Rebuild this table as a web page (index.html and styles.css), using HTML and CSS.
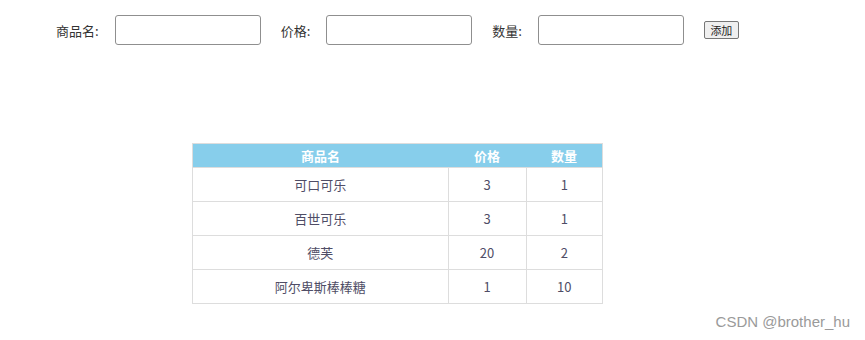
FILE: index.html
```html
<!DOCTYPE html>
<html lang="zh-CN">
<head>
    <meta charset="UTF-8">
    <meta name="viewport" content="width=device-width, initial-scale=1.0">
    <title>商品列表</title>
    <link rel="stylesheet" href="styles.css">
</head>
<body>
<div class="page">
    <div class="add-form">
        <label class="field-label" for="name">商品名:</label>
        <input type="text" id="name" class="field-input">

        <label class="field-label" for="price">价格:</label>
        <input type="text" id="price" class="field-input">

        <label class="field-label" for="count">数量:</label>
        <input type="text" id="count" class="field-input">

        <button class="add-btn">添加</button>
    </div>

    <table class="goods">
        <thead>
        <tr>
            <th class="col-name">商品名</th>
            <th class="col-price">价格</th>
            <th class="col-count">数量</th>
        </tr>
        </thead>
        <tbody>
        <tr><td>可口可乐</td><td>3</td><td>1</td></tr>
        <tr><td>百世可乐</td><td>3</td><td>1</td></tr>
        <tr><td>德芙</td><td>20</td><td>2</td></tr>
        <tr><td>阿尔卑斯棒棒糖</td><td>1</td><td>10</td></tr>
        </tbody>
    </table>

    <div class="watermark">CSDN @brother_hu</div>
</div>
</body>
</html>
```

FILE: styles.css
```css
body {
    margin: 0;
    font-family: "Noto Sans CJK SC", "Noto Sans", sans-serif;
    color: #333;
    background: #fff;
}

.page {
    position: relative;
    width: 865px;
    height: 340px;
}

.add-form {
    display: flex;
    align-items: center;
    padding: 15px 0 0 56px;
    height: 30px;
}

.field-label {
    font-size: 13px;
    margin-right: 16px;
}

.field-input {
    box-sizing: border-box;
    width: 146px;
    height: 30px;
    border: 1px solid #8f8f8f;
    border-radius: 3px;
    margin-right: 20px;
    padding: 0 4px;
}

.add-btn {
    box-sizing: border-box;
    width: 35px;
    height: 18px;
    padding: 0;
    font-family: inherit;
    font-size: 11px;
    line-height: 14px;
    color: #222;
    background: #efefef;
    border: 1px solid #767676;
    border-radius: 2px;
}

.goods {
    margin: 98px 0 0 192px;
    border-collapse: collapse;
    border: 1px solid #ddd;
    font-size: 13px;
    color: #4f4d66;
}

.goods th {
    height: 23px;
    padding: 0;
    background: #87ceeb;
    color: #fff;
    font-weight: bold;
    line-height: 23px;
    text-align: center;
}

.goods td {
    height: 33px;
    padding: 0;
    border: 1px solid #ddd;
    text-align: center;
    line-height: 20px;
}

.col-name {
    width: 255px;
}

.col-price {
    width: 78px;
}

.col-count {
    width: 76px;
}

.watermark {
    position: absolute;
    right: 15px;
    bottom: 10px;
    font-family: "Liberation Sans", Arial, sans-serif;
    font-size: 15px;
    color: #9a9a9a;
}
```
